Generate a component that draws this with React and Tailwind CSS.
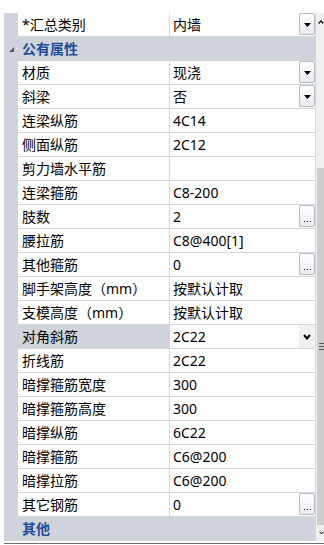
import React from "react";

const rows = [
  { label: "*汇总类别", value: "内墙", btn: "drop" },
  { header: "公有属性", tri: true },
  { label: "材质", value: "现浇", btn: "drop" },
  { label: "斜梁", value: "否", btn: "drop" },
  { label: "连梁纵筋", value: "4C14" },
  { label: "侧面纵筋", value: "2C12" },
  { label: "剪力墙水平筋", value: "" },
  { label: "连梁箍筋", value: "C8-200" },
  { label: "肢数", value: "2", btn: "dots" },
  { label: "腰拉筋", value: "C8@400[1]" },
  { label: "其他箍筋", value: "0", btn: "dots" },
  { label: "脚手架高度（mm）", value: "按默认计取" },
  { label: "支模高度（mm）", value: "按默认计取" },
  { label: "对角斜筋", value: "2C22", btn: "chev", selected: true },
  { label: "折线筋", value: "2C22" },
  { label: "暗撑箍筋宽度", value: "300" },
  { label: "暗撑箍筋高度", value: "300" },
  { label: "暗撑纵筋", value: "6C22" },
  { label: "暗撑箍筋", value: "C6@200" },
  { label: "暗撑拉筋", value: "C6@200" },
  { label: "其它钢筋", value: "0", btn: "dots" },
  { header: "其他" },
];

function DropBtn() {
  return (
    <div className="w-[16px] h-[22px] self-start border border-[#b4bac4] rounded-[2px] bg-gradient-to-b from-white to-[#e9ebef] flex items-center justify-center">
      <svg width="7" height="4" viewBox="0 0 7 4" className="mt-[2px]">
        <polygon points="0,0 7,0 3.5,4" fill="#000" />
      </svg>
    </div>
  );
}

function DotsBtn() {
  return (
    <div className="w-[16px] h-[22px] self-start border border-[#b4bac4] rounded-[2px] bg-gradient-to-b from-white to-[#e9ebef] flex items-end justify-center pb-[4px] gap-[2px]">
      <div className="w-[1px] h-[1px] bg-[#333]" />
      <div className="w-[1px] h-[1px] bg-[#333]" />
      <div className="w-[1px] h-[1px] bg-[#333]" />
    </div>
  );
}

function ChevBtn() {
  return (
    <div className="w-[16px] h-full bg-[#f0f0f0] flex items-center justify-center">
      <svg width="8" height="6" viewBox="0 0 8 6">
        <polyline points="1,1 4,4.5 7,1" fill="none" stroke="#000" strokeWidth="2" />
      </svg>
    </div>
  );
}

export default function App() {
  return (
    <div
      className="w-[324px] h-[545px] bg-white overflow-hidden relative text-[14px] text-black"
      style={{ fontFamily: '"Noto Sans", "Noto Sans CJK SC", sans-serif' }}
    >
      <div className="flex pt-[13px] pl-[4px]">
        <div className="w-[312px] flex flex-col">
          {rows.map((r, i) =>
            r.header ? (
              <div key={i} className="flex h-[24px] bg-[#cfd4dc]">
                <div className="w-[14px] flex items-center justify-center">
                  {r.tri && (
                    <svg width="5" height="5" viewBox="0 0 5 5" className="mt-[1px]">
                      <polygon points="5,0 5,5 0,5" fill="#555a62" />
                    </svg>
                  )}
                </div>
                <div className="flex-1 flex items-center pl-[4px] font-bold text-[#1f4e99] leading-none">
                  {r.header}
                </div>
              </div>
            ) : (
              <div key={i} className="flex h-[24px]">
                <div className="w-[14px] bg-[#cfd4dc]" />
                <div
                  className={`w-[152px] flex items-center pl-[4px] border-b border-r border-[#d3d7df] leading-none whitespace-nowrap ${
                    r.selected ? "bg-[#cfd4dc]" : "bg-white"
                  }`}
                >
                  {r.label}
                </div>
                <div className="w-[146px] flex items-center justify-between pl-[3px] border-b border-r border-[#d3d7df] leading-none">
                  <span>{r.value}</span>
                  {r.btn === "drop" && <DropBtn />}
                  {r.btn === "dots" && <DotsBtn />}
                  {r.btn === "chev" && <ChevBtn />}
                </div>
              </div>
            )
          )}
        </div>
        <div className="w-[8px] h-[528px] bg-[#f0f0f0] flex flex-col">
          <div className="h-[17px] flex items-center pl-[2px]">
            <svg width="8" height="6" viewBox="0 0 8 6">
              <polyline points="1,5 4,1.5 7,5" fill="none" stroke="#000" strokeWidth="1.6" />
            </svg>
          </div>
          <div className="h-[138px]" />
          <div className="h-[357px] bg-[#cdcdcd] ml-[1px] flex items-center justify-center pl-[2px]">
            <div className="flex flex-col gap-[2px] w-[5px]">
              <div className="h-[1px] bg-[#555]" />
              <div className="h-[1px] bg-[#555]" />
              <div className="h-[1px] bg-[#555]" />
            </div>
          </div>
          <div className="flex-1 flex items-center pl-[3px]">
            <svg width="8" height="6" viewBox="0 0 8 6">
              <polyline points="1,1 4,4.5 7,1" fill="none" stroke="#000" strokeWidth="1.6" />
            </svg>
          </div>
        </div>
      </div>
      <div className="ml-[4px] mt-[2px] h-[1px] bg-[#6e6e6e]" />
    </div>
  );
}
